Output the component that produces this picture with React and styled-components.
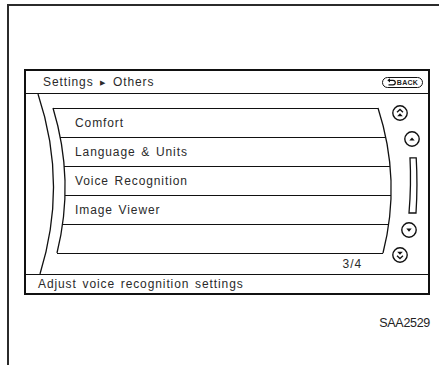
import React from 'react';
import styled, { createGlobalStyle } from 'styled-components';

const GlobalStyle = createGlobalStyle`
  html, body {
    margin: 0;
    padding: 0;
    background: #fff;
  }
  body {
    font-family: "Liberation Sans", Arial, sans-serif;
    color: #222;
  }
`;

// curve helpers for the bent list edges (body coordinates)
const LEFT_CURVE = [27, 49, 31];
const RIGHT_CURVE = [352, 375.5, 357];
const TOP = 14;
const BOTTOM = 159;

const curveX = ([a, c, b], y) => {
  const t = (y - TOP) / (BOTTOM - TOP);
  return Math.round((1 - t) * (1 - t) * a + 2 * t * (1 - t) * c + t * t * b);
};

const Page = styled.div`
  width: 439px;
  height: 365px;
  padding: 4px 0 0 7px;
  box-sizing: border-box;
  overflow: hidden;
  background: #fff;
`;

const Frame = styled.div`
  height: 100%;
  box-sizing: border-box;
  border-top: 2px solid #2b2b2b;
  border-left: 2px solid #2b2b2b;
  padding: 63px 9px 0 15px;
  display: flex;
  flex-direction: column;
`;

const Screen = styled.div`
  height: 226px;
  box-sizing: border-box;
  border: 2px solid #111;
  display: flex;
  flex-direction: column;
`;

const Header = styled.div`
  height: 23px;
  box-sizing: border-box;
  border-bottom: 1px solid #111;
  display: flex;
  align-items: center;
  justify-content: space-between;
  padding: 0 5px 0 17px;
`;

const Label = styled.span`
  font-size: 12px;
  letter-spacing: 0.9px;
  word-spacing: 1.5px;
  color: #2a2a2a;
  white-space: nowrap;
`;

const Sep = styled.span`
  font-size: 7px;
  margin: 0 1px;
  vertical-align: 1px;
`;

const BackButton = styled.div`
  width: 41px;
  height: 11px;
  box-sizing: border-box;
  border: 1.3px solid #111;
  border-radius: 6px;
  display: flex;
  align-items: center;
  justify-content: center;
  gap: 1px;
  font-size: 7px;
  font-weight: bold;
  letter-spacing: 0.3px;
  color: #222;
`;

const Body = styled.div`
  position: relative;
  height: 181px;
  box-sizing: border-box;
  border-bottom: 1px solid #111;
  display: flex;
`;

const Arcs = styled.svg`
  position: absolute;
  left: 0;
  top: 0;
  pointer-events: none;
`;

const List = styled.div`
  width: 366px;
  flex-shrink: 0;
  padding-top: 14px;
  box-sizing: border-box;
  display: flex;
  flex-direction: column;
`;

const Row = styled.div`
  margin-left: ${(p) => p.$left}px;
  width: ${(p) => p.$width}px;
  height: 29px;
  box-sizing: border-box;
  border-top: 1px solid #111;
  display: flex;
  align-items: center;
  padding-left: ${(p) => 49 - p.$left}px;
`;

const ListFoot = styled.div`
  margin-left: ${(p) => p.$left}px;
  width: ${(p) => p.$width}px;
  height: 21px;
  box-sizing: border-box;
  border-top: 1px solid #111;
  display: flex;
  align-items: center;
  justify-content: flex-end;
  padding-right: 21px;
`;

const ScrollColumn = styled.div`
  flex: 1;
  padding-top: 11px;
  display: flex;
  flex-direction: column;
  align-items: flex-start;
`;

const ScrollItem = styled.div`
  margin-left: ${(p) => p.$x}px;
  margin-top: ${(p) => p.$gap}px;
  display: flex;
`;

const Status = styled.div`
  flex: 1;
  display: flex;
  align-items: center;
  padding-left: 12px;
`;

const Caption = styled.div`
  margin-top: 21px;
  text-align: right;
  font-size: 12.5px;
  letter-spacing: -0.3px;
  color: #222;
`;

const Circle = ({ children }) => (
  <svg width="16" height="16" viewBox="0 0 16 16">
    <circle cx="8" cy="8" r="7.2" fill="none" stroke="#111" strokeWidth="1.4" />
    {children}
  </svg>
);

const DoubleUp = () => (
  <Circle>
    <path d="M5 7.2 L8 4.4 L11 7.2" fill="none" stroke="#111" strokeWidth="1.3" />
    <path d="M5.2 11.2 L8 8.2 L10.8 11.2 Z" fill="#111" />
  </Circle>
);

const Up = () => (
  <Circle>
    <path d="M5.3 9.6 L8 6.4 L10.7 9.6 Z" fill="#111" />
  </Circle>
);

const Down = () => (
  <Circle>
    <path d="M5.3 6.6 L8 9.8 L10.7 6.6 Z" fill="#111" />
  </Circle>
);

const DoubleDown = () => (
  <Circle>
    <path d="M5.2 4.8 L8 7.8 L10.8 4.8 Z" fill="#111" />
    <path d="M5 8.8 L8 11.6 L11 8.8" fill="none" stroke="#111" strokeWidth="1.3" />
  </Circle>
);

const ScrollTrack = () => (
  <svg width="11" height="57" viewBox="0 0 11 57">
    <path
      d="M2 0.8 H8.2 Q9.8 28 8 56 H1 Q3.4 28 2 0.8 Z"
      fill="none"
      stroke="#111"
      strokeWidth="1.3"
    />
  </svg>
);

const BackArrow = () => (
  <svg width="9" height="8" viewBox="0 0 9 8">
    <path d="M0.3 2.3 L3 0.2 L3 4.4 Z" fill="#111" />
    <path d="M3 2.3 H6 A2.3 2.3 0 0 1 6 6.9 H1.5" fill="none" stroke="#111" strokeWidth="1.2" />
  </svg>
);

const items = ['Comfort', 'Language & Units', 'Voice Recognition', 'Image Viewer', ''];

function App() {
  const rows = items.map((text, i) => {
    const y = TOP + i * 29;
    const left = curveX(LEFT_CURVE, y);
    const right = curveX(RIGHT_CURVE, y);
    return { text, left, width: right - left };
  });
  const footLeft = curveX(LEFT_CURVE, BOTTOM);
  const footRight = curveX(RIGHT_CURVE, BOTTOM);

  return (
    <>
      <GlobalStyle />
      <Page>
        <Frame>
          <Screen>
            <Header>
              <Label>
                Settings <Sep>▶</Sep> Others
              </Label>
              <BackButton>
                <BackArrow />
                BACK
              </BackButton>
            </Header>
            <Body>
              <Arcs width="402" height="180" viewBox="0 0 402 180">
                <path d="M12 0 Q42 90 14 180" fill="none" stroke="#111" strokeWidth="1.3" />
                <path d="M27 14 Q49 86.5 31 159" fill="none" stroke="#111" strokeWidth="1.3" />
                <path d="M352 14 Q375.5 86.5 357 159" fill="none" stroke="#111" strokeWidth="1.3" />
              </Arcs>
              <List>
                {rows.map((r, i) => (
                  <Row key={i} $left={r.left} $width={r.width}>
                    <Label>{r.text}</Label>
                  </Row>
                ))}
                <ListFoot $left={footLeft} $width={footRight - footLeft}>
                  <Label>3/4</Label>
                </ListFoot>
              </List>
              <ScrollColumn>
                <ScrollItem $x={0} $gap={0}>
                  <DoubleUp />
                </ScrollItem>
                <ScrollItem $x={12} $gap={10}>
                  <Up />
                </ScrollItem>
                <ScrollItem $x={16} $gap={10}>
                  <ScrollTrack />
                </ScrollItem>
                <ScrollItem $x={9} $gap={8}>
                  <Down />
                </ScrollItem>
                <ScrollItem $x={0} $gap={9}>
                  <DoubleDown />
                </ScrollItem>
              </ScrollColumn>
            </Body>
            <Status>
              <Label>Adjust voice recognition settings</Label>
            </Status>
          </Screen>
          <Caption>SAA2529</Caption>
        </Frame>
      </Page>
    </>
  );
}

export default App;
